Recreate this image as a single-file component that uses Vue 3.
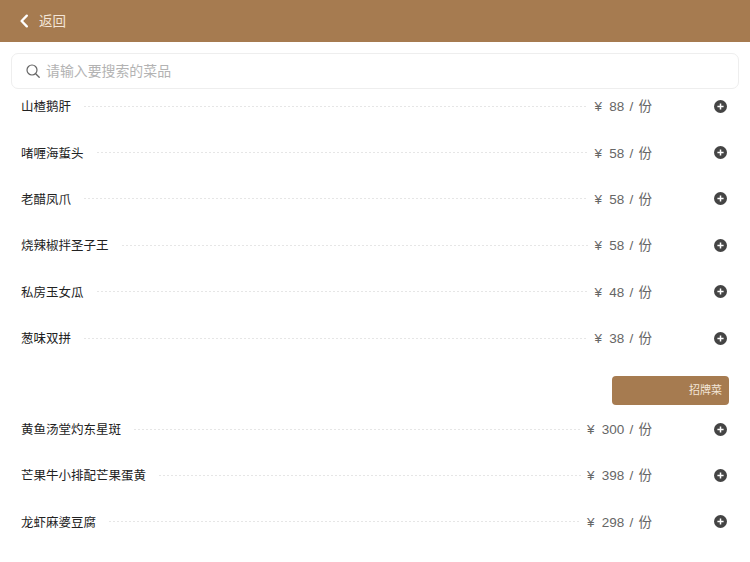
<template>
  <div class="page">
    <div class="header">
      <svg class="back-icon" width="10" height="14" viewBox="0 0 10 14" fill="none">
        <path d="M7.8 1.6L2.6 7L7.8 12.4" stroke="#fff" stroke-width="2.3" stroke-linecap="round" stroke-linejoin="round"/>
      </svg>
      <span class="back-text">返回</span>
    </div>

    <div class="search-wrap">
      <div class="search">
        <svg width="14" height="14" viewBox="0 0 14 14" fill="none">
          <circle cx="6" cy="6" r="5" stroke="#666" stroke-width="1.2"/>
          <path d="M9.7 9.7L13.2 13.2" stroke="#666" stroke-width="1.3" stroke-linecap="round"/>
        </svg>
        <span class="placeholder">请输入要搜索的菜品</span>
      </div>
    </div>

    <div class="group" v-for="group in groups" :key="group.title">
      <div v-if="group.title" class="tag-row">
        <div class="tag">{{ group.title }}</div>
      </div>
      <div class="row" v-for="dish in group.dishes" :key="dish.name">
        <span class="name">{{ dish.name }}</span>
        <span class="dots"></span>
        <span class="price"><span class="yen">¥</span> {{ dish.price }} / 份</span>
        <svg class="add" width="13" height="13" viewBox="0 0 13 13">
          <circle cx="6.5" cy="6.5" r="6.5" fill="#444"/>
          <path d="M6.5 3.4V9.6M3.4 6.5H9.6" stroke="#fff" stroke-width="1.5"/>
        </svg>
      </div>
    </div>
  </div>
</template>

<script setup>
const groups = [
  {
    title: '',
    dishes: [
      { name: '山楂鹅肝', price: 88 },
      { name: '啫喱海蜇头', price: 58 },
      { name: '老醋凤爪', price: 58 },
      { name: '烧辣椒拌圣子王', price: 58 },
      { name: '私房玉女瓜', price: 48 },
      { name: '葱味双拼', price: 38 }
    ]
  },
  {
    title: '招牌菜',
    dishes: [
      { name: '黄鱼汤堂灼东星斑', price: 300 },
      { name: '芒果牛小排配芒果蛋黄', price: 398 },
      { name: '龙虾麻婆豆腐', price: 298 }
    ]
  }
]
</script>

<style>
html, body {
  margin: 0;
  background: #fff;
}
</style>

<style scoped>
.page {
  width: 750px;
  height: 562px;
  overflow: hidden;
  background: #fff;
  font-family: "Liberation Sans", "Noto Sans CJK SC", sans-serif;
}

.header {
  height: 42px;
  background: #a67b50;
  display: flex;
  align-items: center;
  padding-left: 19px;
}

.back-text {
  margin-left: 10px;
  padding-bottom: 2px;
  font-size: 13.5px;
  color: #f3e6d8;
}

.search-wrap {
  padding: 11px 11px 0 11px;
}

.search {
  height: 34px;
  border: 1px solid #eeeeee;
  border-radius: 7px;
  display: flex;
  align-items: center;
  padding-left: 14px;
}

.placeholder {
  margin-left: 6px;
  padding-bottom: 2px;
  font-size: 13.9px;
  color: #b3b3b3;
}

.row {
  height: 34.4px;
  margin-bottom: 12px;
  display: flex;
  align-items: center;
  padding: 0 23px 0 21px;
}

.group .row:last-child {
  margin-bottom: 0;
}

.name {
  padding-bottom: 1px;
  font-size: 12.5px;
  color: #222;
}

.dots {
  flex: 1;
  height: 1px;
  margin: 0 6px 0 13px;
  background: repeating-linear-gradient(90deg, #e6e6e6 0, #e6e6e6 2px, transparent 2px, transparent 4px);
}

.price {
  padding-bottom: 2px;
  font-size: 13.5px;
  color: #666;
  margin-right: 62px;
  word-spacing: 1.5px;
  white-space: nowrap;
}

.yen {
  margin-right: 2px;
}

.tag-row {
  display: flex;
  justify-content: flex-end;
  padding: 21px 21px 6.5px 0;
}

.tag {
  width: 117px;
  height: 29px;
  box-sizing: border-box;
  background: #a67b50;
  border-radius: 4px;
  color: #f3e6d8;
  font-size: 11px;
  line-height: 29px;
  text-align: right;
  padding-right: 7px;
}
</style>
